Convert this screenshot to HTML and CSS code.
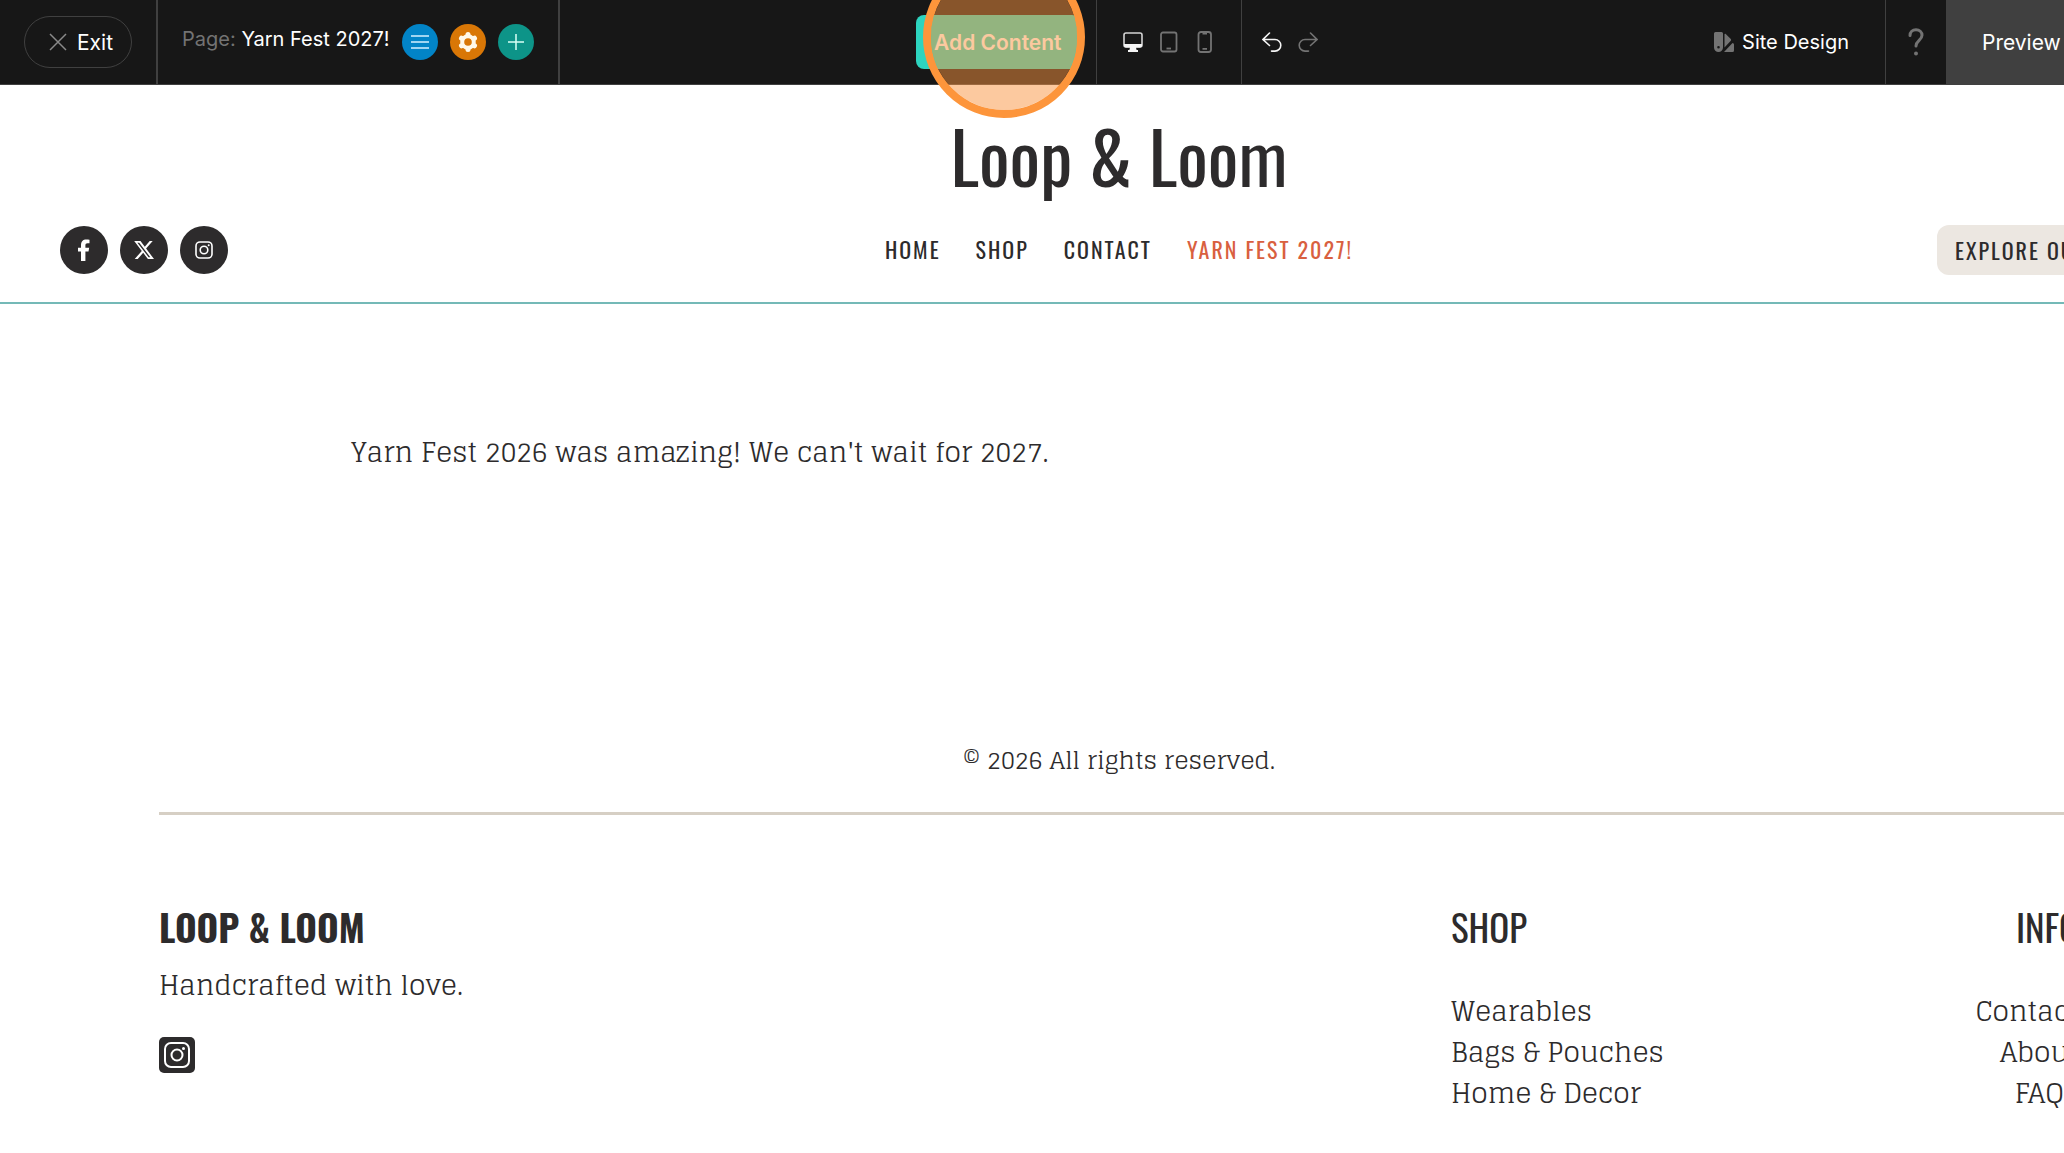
FILE: index.html
```
<!DOCTYPE html>
<html lang="en">
<head>
  <meta charset="UTF-8" />
  <meta name="viewport" content="width=device-width, initial-scale=1.0" />
  <title>Loop &amp; Loom - Yarn Fest 2027!</title>
  <link rel="stylesheet" href="styles.css">
</head>
<body>
  <div class="canvas">

    <!-- editor toolbar -->
    <div class="toolbar">
      <div class="toolbar-group">
        <div class="exit-area">
          <button class="exit-btn">
            <svg width="18" height="18" viewBox="0 0 18 18" fill="none" stroke="#8a8a8a" stroke-width="1.5"><path d="M1 1l16 16M17 1L1 17"/></svg>
            Exit
          </button>
        </div>
        <div class="page-area">
          <span class="page-name"><span class="page-label">Page:</span> Yarn Fest 2027!</span>
          <button class="round-btn blue" aria-label="Pages">
            <svg width="18" height="14" viewBox="0 0 18 14" stroke="#d5f0ff" stroke-width="1.5"><path d="M0 1h18M0 7h18M0 13h18"/></svg>
          </button>
          <button class="round-btn orange" aria-label="Page settings">
            <svg width="20" height="20" viewBox="0 0 20 20" fill="none" stroke="#fff8e8">
              <circle cx="10" cy="10" r="5.8" stroke-width="4"/>
              <path stroke-width="5" stroke-linecap="round" d="M10 2.500v.5M10 17v.5M3.500 6.250l.5.300M16 13.450l.5.300M3.500 13.750l.5-.300M16 6.550l.5-.300"/>
            </svg>
          </button>
          <button class="round-btn teal" aria-label="Add page">
            <svg width="16" height="16" viewBox="0 0 16 16" stroke="#d8fff5" stroke-width="1.5"><path d="M0 8h16M8 0v16"/></svg>
          </button>
        </div>
      </div>

      <div class="toolbar-group">
        <div class="add-area">
          <button class="add-btn">Add Content</button>
          <span class="click-marker"></span>
        </div>
        <div class="device-area">
          <button class="icon-btn" aria-label="Desktop">
            <svg width="20" height="20" viewBox="0 0 20 20"><rect x="1" y="1" width="18" height="14" rx="2" fill="none" stroke="#d4d4d4" stroke-width="1.6"/><path fill="#f5f5f5" d="M1 12h18v1.500a2 2 0 0 1-2 2h-4l.6 2.500H15v2H5v-2h1.400L7 15.500H3a2 2 0 0 1-2-2z"/></svg>
          </button>
          <button class="icon-btn" aria-label="Tablet">
            <svg width="20" height="22" viewBox="0 0 20 22" fill="none" stroke="#737373" stroke-width="1.800"><rect x="2" y="1.500" width="15.500" height="19" rx="2"/><path d="M7.500 17.500h4.500"/></svg>
          </button>
          <button class="icon-btn" aria-label="Phone">
            <svg width="20" height="22" viewBox="0 0 20 22" fill="none" stroke="#737373" stroke-width="1.800"><rect x="3.500" y="1" width="12.500" height="20" rx="2.500"/><path d="M7.500 17.800h4.500M7.500 2.500h4.500"/></svg>
          </button>
        </div>
        <div class="history-area">
          <button class="icon-btn" aria-label="Undo">
            <svg width="20" height="20" viewBox="0 0 20 20" fill="none" stroke="#f5f5f5" stroke-width="1.600" stroke-linecap="round"><path d="M7.500 1L1 7.500l6.500 6M1.500 7.500H13a5.800 5.800 0 0 1 0 11.600H9.500"/></svg>
          </button>
          <button class="icon-btn" aria-label="Redo">
            <svg width="20" height="20" viewBox="0 0 20 20" fill="none" stroke="#737373" stroke-width="1.600" stroke-linecap="round"><path d="M12.500 1L19 7.500l-6.500 6M18.500 7.500H7a5.800 5.800 0 0 0 0 11.600h3.500"/></svg>
          </button>
        </div>
      </div>

      <div class="toolbar-group">
        <button class="design-btn">
          <svg width="20" height="20" viewBox="0 0 20 20" fill="#737373"><path fill-rule="evenodd" d="M1.500 0h6A1.500 1.500 0 0 1 9 1.500v14a4.500 4.500 0 0 1-9 0v-14A1.500 1.500 0 0 1 1.500 0zm3 14a1.300 1.300 0 1 0 0 2.600 1.300 1.300 0 0 0 0-2.600z"/><path d="M10.500 2.500q0-1 1-.8l5.300 5.300q.7 1 0 1.800L10.500 15.500zM18.500 11q1.500 0 1.500 1.500v6q0 1.500-1.500 1.500H10z"/></svg>
          Site Design
        </button>
        <button class="help-btn" aria-label="Help">
          <svg width="16" height="28" viewBox="0 0 16 28" fill="none" stroke="#737373" stroke-width="3" stroke-linecap="round"><path d="M2 7.500C2 4 4.500 1.700 8 1.700s6 2.300 6 5.500c0 5-6 5.300-6 10.800"/><circle cx="8" cy="25.500" r="2" fill="#737373" stroke="none"/></svg>
        </button>
        <button class="preview-btn">Preview</button>
      </div>
    </div>

    <header class="site-header">
      <h1 class="site-title">Loop &amp; Loom</h1>
      <div class="header-row">
        <div class="socials">
          <a href="#" class="social" aria-label="Facebook">
            <svg width="14" height="22" viewBox="0 0 14 22" fill="#fff"><path d="M4 22V12.500H1V8.800h3V6.200C4 2.500 6 .500 9.300.500c1.300 0 2.700.200 3.200.300v3.400h-1.900C8.900 4.200 8.400 5.100 8.400 6.200v2.600h3.800l-.7 3.700H8.400V22z"/></svg>
          </a>
          <a href="#" class="social" aria-label="X">
            <svg width="20" height="18" viewBox="0 0 20 18" fill="#fff"><path fill-rule="evenodd" d="M15.700 0h3l-6.600 7.600L20 18h-6.100L9.200 11.800 3.700 18H.700l7.100-8.100L.2 0h6.300l4.300 5.700zm-1.100 16.200h1.700L5.200 1.700H3.400z"/></svg>
          </a>
          <a href="#" class="social" aria-label="Instagram">
            <svg width="18" height="18" viewBox="0 0 18 18" fill="none" stroke="#fff" stroke-width="1.600"><rect x="1" y="1" width="16" height="16" rx="4"/><circle cx="9" cy="9" r="3.800"/><circle cx="13.700" cy="4.300" r="1" fill="#fff" stroke="none"/></svg>
          </a>
        </div>
        <nav class="site-nav">
          <a href="#">HOME</a>
          <a href="#">SHOP</a>
          <a href="#">CONTACT</a>
          <a href="#" class="active">YARN FEST 2027!</a>
        </nav>
        <div class="header-cta">
          <a href="#" class="explore-btn">EXPLORE OUR SHOP</a>
        </div>
      </div>
    </header>

    <main class="content">
      <p>Yarn Fest 2026 was amazing! We can't wait for 2027.</p>
    </main>

    <footer class="site-footer">
      <p class="copyright"><sup>©</sup> 2026 All rights reserved.</p>
      <div class="footer-cols">
        <div class="footer-brand">
          <h2>LOOP &amp; LOOM</h2>
          <p>Handcrafted with love.</p>
          <a href="#" class="insta-square" aria-label="Instagram">
            <svg width="26" height="26" viewBox="0 0 26 26" fill="none" stroke="#fff" stroke-width="2"><rect x="1" y="1" width="24" height="24" rx="6"/><circle cx="13" cy="13" r="5.500"/><circle cx="19.500" cy="6.500" r="1.500" fill="#fff" stroke="none"/></svg>
          </a>
        </div>
        <div class="footer-links">
          <div class="link-col">
            <h3>SHOP</h3>
            <ul>
              <li><a href="#">Wearables</a></li>
              <li><a href="#">Bags &amp; Pouches</a></li>
              <li><a href="#">Home &amp; Decor</a></li>
            </ul>
          </div>
          <div class="link-col right">
            <h3>INFO</h3>
            <ul>
              <li><a href="#">Contact</a></li>
              <li><a href="#">About</a></li>
              <li><a href="#">FAQs</a></li>
            </ul>
          </div>
        </div>
      </div>
    </footer>
  </div>
</body>
</html>
```

FILE: styles.css
```
* {
  box-sizing: border-box;
}

body {
  margin: 0;
  background: #fff;
  color: #2d2b2c;
  font-family: Glegoo, "Noto Serif", "DejaVu Serif", serif;
  font-size: 27px;
  line-height: 40px;
  overflow: hidden;
}

h1, h2, h3, p, ul {
  margin: 0;
  padding: 0;
}

ul {
  list-style: none;
}

a {
  color: inherit;
  text-decoration: none;
}

button {
  margin: 0;
  padding: 0;
  border: none;
  background: none;
  color: #fff;
  font-family: Inter, "Liberation Sans", sans-serif;
  font-size: 21px;
  cursor: pointer;
}

svg {
  display: block;
  flex: none;
}

/* the site runs past the right edge of the window */
.canvas {
  margin-right: -174px;
}

/* toolbar */
.toolbar {
  display: flex;
  justify-content: space-between;
  height: 85px;
  background: #171717;
  border-bottom: 1px solid #404040;
  font-family: Inter, "Liberation Sans", sans-serif;
  font-size: 20px;
  white-space: nowrap;
}

.toolbar-group {
  display: flex;
}

.exit-area,
.page-area,
.add-area,
.device-area,
.history-area {
  display: flex;
  align-items: center;
}

.exit-area {
  padding: 0 24px;
  border-right: 2px solid #404040;
}

.exit-btn {
  display: flex;
  align-items: center;
  gap: 10px;
  height: 52px;
  padding: 0 18px 0 24px;
  border: 1px solid #404040;
  border-radius: 26px;
}

.page-area {
  gap: 12px;
  padding: 0 24px;
  border-right: 2px solid #404040;
}

.page-name {
  color: #fff;
  padding-bottom: 6px;
}

.page-label {
  color: #737373;
}

.round-btn {
  display: flex;
  align-items: center;
  justify-content: center;
  width: 36px;
  height: 36px;
  border-radius: 50%;
}

.blue {
  background: #0284c7;
}

.orange {
  background: #d97706;
}

.teal {
  background: #0d9488;
}

.add-area {
  position: relative;
  padding-right: 16px;
}

.add-btn {
  height: 54px;
  padding: 0 18px;
  border-radius: 8px;
  background: #2dd4bf;
  font-weight: 600;
}

.click-marker {
  position: absolute;
  top: -44px;
  left: 7px;
  width: 162px;
  height: 162px;
  border: 8px solid #fd953b;
  border-radius: 50%;
  background: rgba(249, 147, 63, 0.5);
  background-clip: padding-box;
}

.device-area {
  gap: 16px;
  padding: 0 26px;
  border-left: 1px solid #404040;
  border-right: 1px solid #404040;
}

.history-area {
  gap: 16px;
  padding: 0 4px 0 20px;
}

.icon-btn {
  width: 20px;
}

.design-btn {
  display: flex;
  align-items: center;
  gap: 8px;
  padding: 0 36px;
  font-size: 20px;
}

.help-btn {
  padding: 0 22px;
  border-left: 1px solid #404040;
}

.preview-btn {
  width: 292px;
  padding-left: 36px;
  background: #404040;
  text-align: left;
}

/* site header */
.site-header {
  padding: 26px 60px 27px;
  border-bottom: 2px solid #74b9b7;
  font-family: Oswald, "Roboto Condensed", sans-serif;
}

.site-title {
  margin-bottom: 26px;
  font-size: 72px;
  font-weight: 400;
  line-height: 88px;
  text-align: center;
}

.header-row {
  display: grid;
  grid-template-columns: 1fr auto 1fr;
  align-items: center;
}

.socials {
  display: flex;
  gap: 12px;
}

.social {
  display: flex;
  align-items: center;
  justify-content: center;
  width: 48px;
  height: 48px;
  border-radius: 50%;
  background: #2d2b2c;
}

.site-nav {
  display: flex;
  gap: 35px;
  padding-bottom: 2px;
  font-size: 22px;
  letter-spacing: 2px;
}

.site-nav .active {
  color: #d9603f;
}

.header-cta {
  display: flex;
  justify-content: flex-end;
}

.explore-btn {
  width: 241px;
  height: 50px;
  padding-left: 18px;
  border-radius: 12px;
  background: #ece7e1;
  font-size: 22px;
  line-height: 50px;
  letter-spacing: 2px;
  white-space: nowrap;
}

/* page content */
.content {
  padding: 128px 351px 269px;
}

/* footer */
.site-footer {
  padding: 0 159px 40px;
}

.copyright {
  padding-bottom: 31px;
  border-bottom: 3px solid #d6cfc4;
  font-size: 24px;
  text-align: center;
}

.copyright sup {
  font-size: 24px;
  line-height: 0;
  vertical-align: baseline;
}

.footer-cols {
  display: grid;
  grid-template-columns: 2fr 1fr;
  gap: 36px;
  padding-top: 88px;
}

h2, h3 {
  font-family: Oswald, "Roboto Condensed", sans-serif;
  font-size: 37px;
  line-height: 48px;
}

h3 {
  font-weight: 400;
  margin-bottom: 40px;
}

.footer-brand p {
  margin: 14px 0 32px;
}

.insta-square {
  display: flex;
  align-items: center;
  justify-content: center;
  width: 36px;
  height: 36px;
  border-radius: 5px;
  background: #2d2b2c;
}

.footer-links {
  display: flex;
  justify-content: space-between;
}

.footer-links li {
  line-height: 41px;
}

.right {
  text-align: right;
}
```
